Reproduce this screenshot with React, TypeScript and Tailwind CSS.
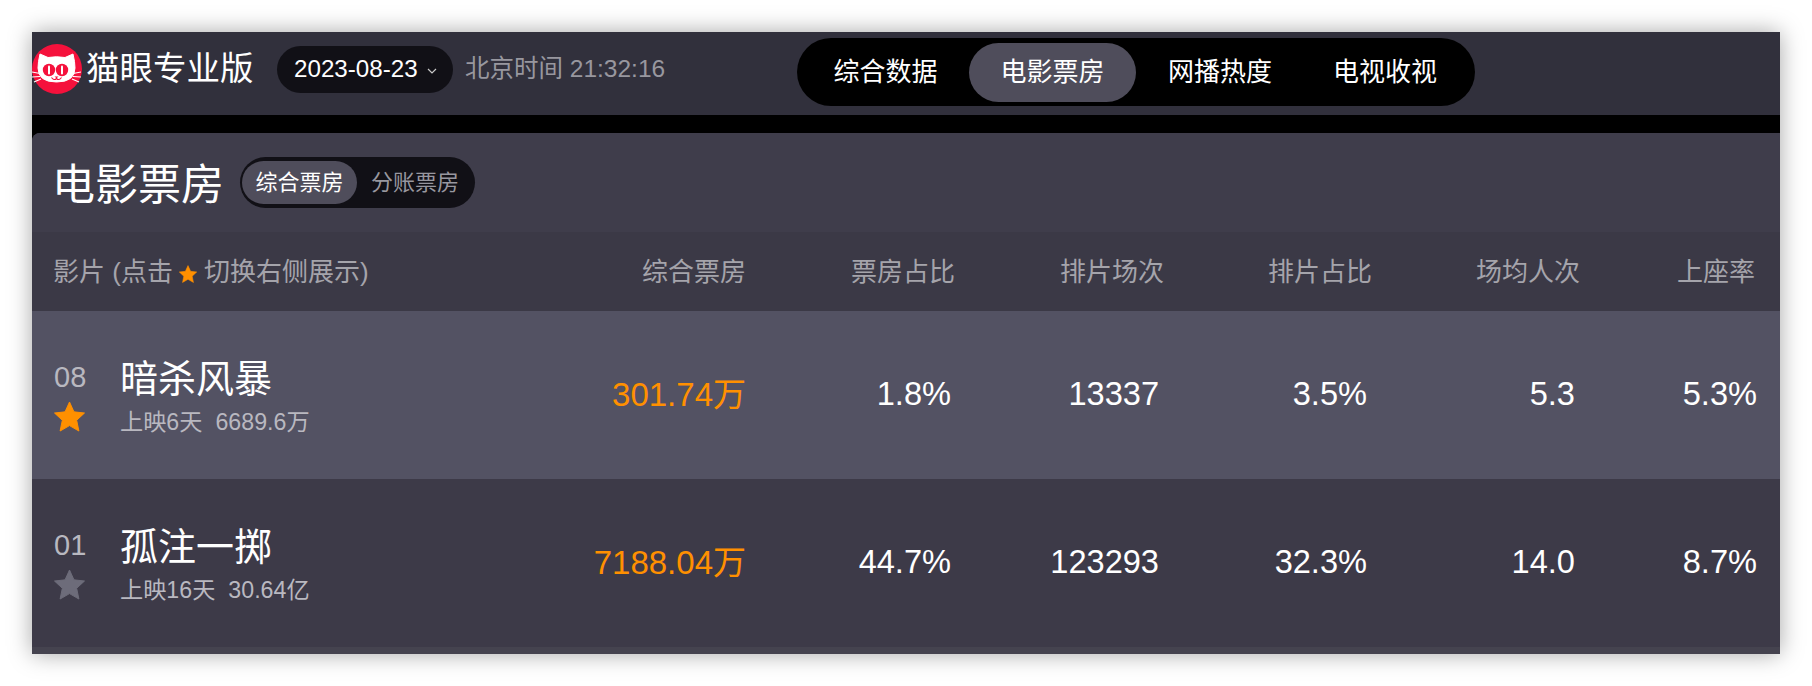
import React from "react";

const FONT = "font-['Liberation_Sans','Noto_Sans_CJK_SC',sans-serif]";

function Star({ className }: { className: string }) {
  return (
    <svg viewBox="0 0 32 32" className={className} fill="currentColor">
      <path d="M16 1 L20.6 11.2 L31.5 12.4 L23.4 19.9 L25.7 31 L16 25.4 L6.3 31 L8.6 19.9 L0.5 12.4 L11.4 11.2 Z" strokeLinejoin="round" stroke="currentColor" strokeWidth="1" />
    </svg>
  );
}

function Logo() {
  return (
    <svg viewBox="0 0 50 50" className="w-[50px] h-[50px] shrink-0">
      <circle cx="25" cy="25" r="25" fill="#f5113c" />
      <path d="M8 10 L16 13.5 Q24.5 12 33 13.5 L41 10 Q43 18 43 24 Q43 38 24.5 38 Q6 38 6 24 Q6 18 8 10 Z" fill="#fff" strokeLinejoin="round" stroke="#fff" strokeWidth="1" />
      <circle cx="17" cy="26" r="6.2" fill="#f5113c" />
      <circle cx="30" cy="26" r="6.2" fill="#f5113c" />
      <rect x="16" y="21.5" width="2" height="9" rx="1" fill="#fff" />
      <rect x="29" y="21.5" width="2" height="9" rx="1" fill="#fff" />
      <path d="M22.5 32.5 L26.5 32.5 L24.5 34.3 Z" fill="#f5113c" />
      <path d="M19.5 33.5 Q22 37 24.5 34.5 Q27 37 29.5 33.5" fill="none" stroke="#f5113c" strokeWidth="1.1" />
      <path d="M0 28 L8 29.5 M0 33 L8 32.5 M2 38 L9 35 M49 28 L41 29.5 M49 33 L41 32.5 M47 38 L40 35" stroke="#fff" strokeWidth="1.2" />
    </svg>
  );
}

function Row({
  bg, rank, title, sub1, sub2, box, starClass, vals,
}: {
  bg: string; rank: string; title: string; sub1: string; sub2: string; box: string; starClass: string; vals: string[];
}) {
  return (
    <div className={`grid grid-cols-[713px_210px_209px_208px_208px_175px] items-center h-[168px] ${bg}`}>
      <div className="flex items-center justify-between pl-[22px]">
        <div className="flex items-center">
          <div className="w-[66px] flex flex-col items-start -mt-[1px]">
            <div className="text-[29px] leading-[36px] text-[#b9b8c0]">{rank}</div>
            <Star className={`w-[31px] h-[31px] mt-[6px] -mb-[2px] ${starClass}`} />
          </div>
          <div className="flex flex-col">
            <div className="text-[38px] leading-[46px] text-white">{title}</div>
            <div className="text-[23.2px] leading-[28px] text-[#b9b8c0] flex gap-[13px] mt-[6px] -mb-[2px]">
              <span>{sub1}</span>
              <span>{sub2}</span>
            </div>
          </div>
        </div>
        <div className="text-[33px] text-[#ff9000] -mr-[1px] mb-[1px]">{box}</div>
      </div>
      <div className="text-[32.6px] text-white text-right pr-[4px] mb-[1px]">{vals[0]}</div>
      <div className="text-[32.6px] text-white text-right pr-[5px] mb-[1px]">{vals[1]}</div>
      <div className="text-[32.6px] text-white text-right pr-[5px] mb-[1px]">{vals[2]}</div>
      <div className="text-[32.6px] text-white text-right pr-[5px] mb-[1px]">{vals[3]}</div>
      <div className="text-[32.6px] text-white text-right -mr-[2px] mb-[1px]">{vals[4]}</div>
    </div>
  );
}

export default function App() {
  return (
    <div className={`bg-white w-[1812px] h-[686px] overflow-hidden p-8 ${FONT}`}>
      <div className="w-[1748px] h-[622px] flex flex-col bg-black shadow-[0_0_22px_rgba(0,0,0,0.35)]">
        <header className="h-[83px] shrink-0 bg-[#31303c] flex items-center relative">
          <div className="flex items-center mb-[9px]">
            <Logo />
            <div className="text-[33.5px] text-white ml-[4px] leading-[50px] -mt-[1px]">猫眼专业版</div>
            <div className="ml-[23.5px] w-[176px] h-[47px] rounded-full bg-[#111016] text-white text-[24.2px] flex items-center pl-[17px]">
              <span>2023-08-23</span>
              <svg viewBox="0 0 10 6" className="w-[10px] h-[6px] ml-[9px] mt-[3px]" fill="none" stroke="#c9c9c9" strokeWidth="1.2">
                <path d="M1 1 L5 5 L9 1" />
              </svg>
            </div>
            <div className="ml-[12px] text-[24.5px] text-[#98979f]">北京时间 21:32:16</div>
          </div>
          <nav className="absolute left-[765px] top-[6px] w-[678px] h-[68px] rounded-full bg-black flex items-center text-[26px] text-white pl-[5px]">
            <div className="w-[167px] text-center whitespace-nowrap">综合数据</div>
            <div className="w-[167px] h-[59px] rounded-full bg-[#4f4d5b] flex items-center justify-center whitespace-nowrap">电影票房</div>
            <div className="w-[103px] ml-[32px] text-center whitespace-nowrap">网播热度</div>
            <div className="w-[103px] ml-[62px] text-center whitespace-nowrap">电视收视</div>
          </nav>
        </header>
        <div className="h-[18px] shrink-0 bg-black" />
        <main className="flex-1 flex flex-col bg-[#45434f] rounded-tl-[8px] overflow-hidden">
          <div className="h-[99px] shrink-0 bg-[#3f3d4b] flex items-center pl-[20px]">
            <div className="text-[43px] text-white leading-[50px] mt-[4px]">电影票房</div>
            <div className="ml-[16px] w-[235px] h-[51px] rounded-full bg-[#111016] flex items-center pl-[2px] text-[22px]">
              <div className="w-[115px] h-[43px] rounded-full bg-[#4f4d5b] text-white flex items-center justify-center">综合票房</div>
              <div className="ml-[14px] text-[#98979f]">分账票房</div>
            </div>
          </div>
          <div className="h-[79px] shrink-0 bg-[#3b3946] grid grid-cols-[713px_210px_209px_208px_208px_175px] items-center text-[26px] text-[#a5a4ab]">
            <div className="flex items-center justify-between pl-[21px] pt-[2px]">
              <div className="flex items-center">
                <span>影片 (点击</span>
                <Star className="w-[18px] h-[18px] text-[#ff9000] ml-[6px] mr-[7px] mt-[3px]" />
                <span>切换右侧展示)</span>
              </div>
              <span className="mr-[-1px]">综合票房</span>
            </div>
            <div className="text-right pt-[2px]">票房占比</div>
            <div className="text-right pt-[2px]">排片场次</div>
            <div className="text-right pt-[2px]">排片占比</div>
            <div className="text-right pt-[2px]">场均人次</div>
            <div className="text-right pt-[2px]">上座率</div>
          </div>
          <Row
            bg="bg-[#535263]"
            rank="08"
            title="暗杀风暴"
            sub1="上映6天"
            sub2="6689.6万"
            box="301.74万"
            starClass="text-[#ff9000]"
            vals={["1.8%", "13337", "3.5%", "5.3", "5.3%"]}
          />
          <Row
            bg="bg-[#3d3a48]"
            rank="01"
            title="孤注一掷"
            sub1="上映16天"
            sub2="30.64亿"
            box="7188.04万"
            starClass="text-[#6d6c7a]"
            vals={["44.7%", "123293", "32.3%", "14.0", "8.7%"]}
          />
        </main>
      </div>
    </div>
  );
}
